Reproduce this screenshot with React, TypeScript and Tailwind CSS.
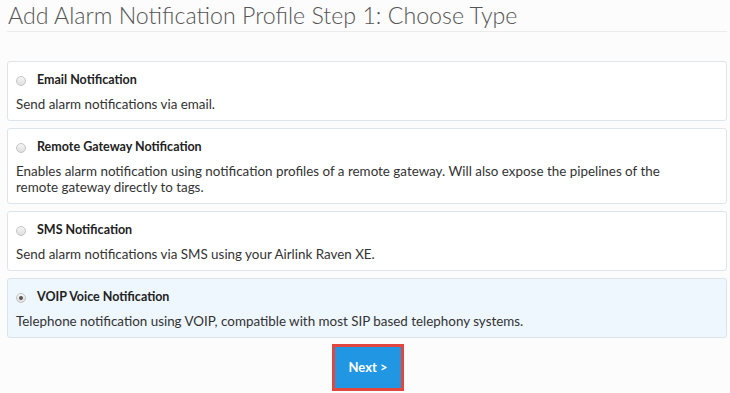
import { useState } from "react";

type Option = { id: string; title: string; desc: string };

const OPTIONS: Option[] = [
  { id: "email", title: "Email Notification", desc: "Send alarm notifications via email." },
  {
    id: "remote",
    title: "Remote Gateway Notification",
    desc: "Enables alarm notification using notification profiles of a remote gateway. Will also expose the pipelines of the remote gateway directly to tags.",
  },
  { id: "sms", title: "SMS Notification", desc: "Send alarm notifications via SMS using your Airlink Raven XE." },
  {
    id: "voip",
    title: "VOIP Voice Notification",
    desc: "Telephone notification using VOIP, compatible with most SIP based telephony systems.",
  },
];

function Radio({ checked }: { checked: boolean }) {
  return (
    <span className="w-[10px] h-[10px] rounded-full border border-[#c4c4c4] bg-gradient-to-b from-[#f6f6f6] to-[#dedede] flex items-center justify-center shrink-0">
      {checked && <span className="w-[4px] h-[4px] rounded-full bg-[#555]" />}
    </span>
  );
}

export default function App() {
  const [selected, setSelected] = useState("voip");

  return (
    <div
      className="min-h-[393px] bg-[#fcfcfc] pl-[7px] pr-[3px] text-[#333]"
      style={{ fontFamily: "Lato, 'Open Sans', sans-serif" }}
    >
      {/* Header */}
      <h1 className="pl-[1px] pt-[1px] text-[23.2px] leading-[28px] font-light text-[#555]">
        Add Alarm Notification Profile Step 1: Choose Type
      </h1>
      <div className="mt-[2px] border-t border-[#ececec]" />

      {/* Options */}
      <div className="mt-[29px] flex flex-col gap-[7px]">
        {OPTIONS.map((opt) => {
          const active = opt.id === selected;
          return (
            <div
              key={opt.id}
              onClick={() => setSelected(opt.id)}
              className={
                active
                  ? "rounded-[3px] border border-[#dfe4ea] bg-[#eef6fe] pl-[8px] pr-3 pt-[10px] pb-[8px] cursor-pointer"
                  : "rounded-[3px] border border-[#dfe4ea] bg-white pl-[8px] pr-3 pt-[10px] pb-[8px] cursor-pointer"
              }
            >
              <div className="flex items-center gap-[11px] h-[17px]">
                <Radio checked={active} />
                <span className="text-[12.5px] font-bold text-[#222]">{opt.title}</span>
              </div>
              <p className="mt-[7px] max-w-[680px] text-[13.4px] leading-[16px] text-[#333]">{opt.desc}</p>
            </div>
          );
        })}
      </div>

      {/* Next */}
      <div className="mt-[6px] flex justify-center pl-[2px]">
        <button
          type="button"
          className="w-[72px] h-[47px] border-[3px] border-[#e2463f] bg-[#2196e3] text-white text-[13px] font-bold"
        >
          Next &gt;
        </button>
      </div>
    </div>
  );
}
